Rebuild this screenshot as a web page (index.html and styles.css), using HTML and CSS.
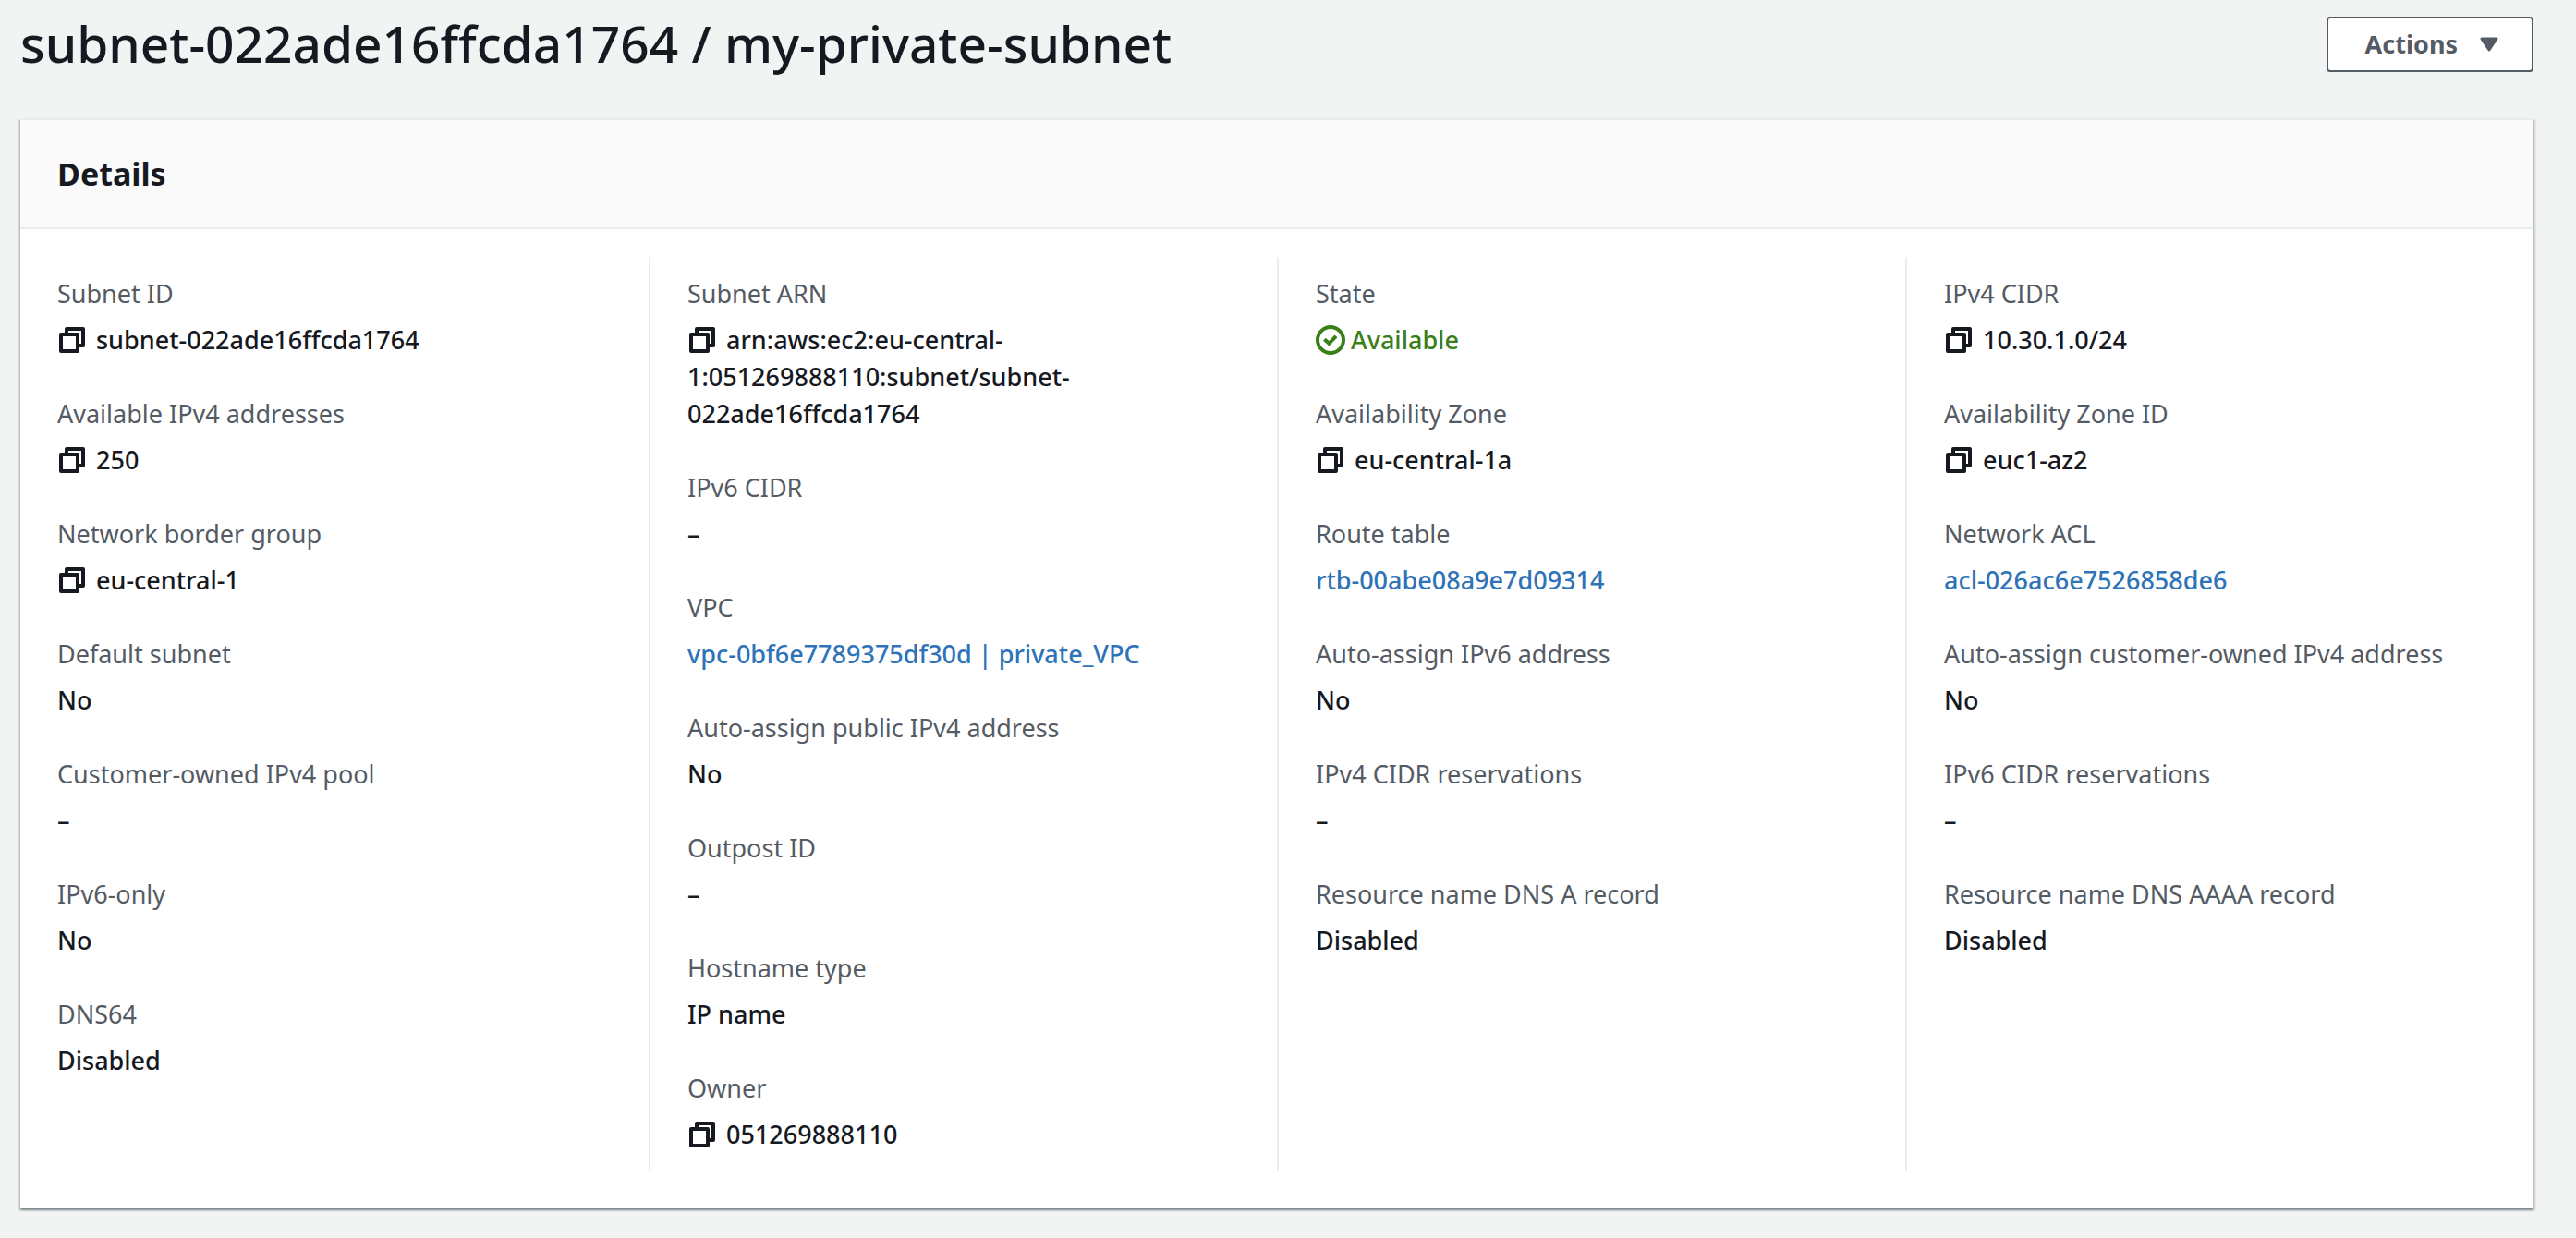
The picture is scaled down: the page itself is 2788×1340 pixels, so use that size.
FILE: index.html
```html
<!DOCTYPE html>
<html lang="en">
<head>
<meta charset="utf-8">
<meta name="viewport" content="width=device-width, initial-scale=1">
<title>subnet-022ade16ffcda1764 / my-private-subnet</title>
<link rel="stylesheet" href="styles.css">
</head>
<body>
<svg class="sprite" aria-hidden="true">
  <symbol id="copy" viewBox="0 0 16 16">
    <g fill="none" stroke="currentColor" stroke-width="2" stroke-linejoin="round">
      <path d="M2 5h9v9H2z"/>
      <path d="M5 5V2h9v9h-3"/>
    </g>
  </symbol>
  <symbol id="check" viewBox="0 0 16 16">
    <g fill="none" stroke="currentColor" stroke-width="2">
      <circle cx="8" cy="8" r="7"/>
      <path d="M4.700 7.600 7.200 9.900 11 5.900"/>
    </g>
  </symbol>
</svg>
<main class="page">
  <header class="page-header">
    <h1 class="page-title">subnet-022ade16ffcda1764 / my-private-subnet</h1>
    <button class="actions" type="button">Actions
      <svg class="caret" viewBox="0 0 20 16" aria-hidden="true"><path d="M2 2h16l-8 12z" fill="currentColor" stroke="currentColor" stroke-width="3" stroke-linejoin="round"/></svg>
    </button>
  </header>
  <section class="card">
    <h2 class="card-title">Details</h2>
    <div class="columns">
      <dl class="column">
        <div class="field"><dt>Subnet ID</dt><dd><button class="copy" type="button" aria-label="Copy subnet ID"><svg><use href="#copy"/></svg></button>subnet-022ade16ffcda1764</dd></div>
        <div class="field"><dt>Available IPv4 addresses</dt><dd><button class="copy" type="button" aria-label="Copy available IPv4 addresses"><svg><use href="#copy"/></svg></button>250</dd></div>
        <div class="field"><dt>Network border group</dt><dd><button class="copy" type="button" aria-label="Copy network border group"><svg><use href="#copy"/></svg></button>eu-central-1</dd></div>
        <div class="field"><dt>Default subnet</dt><dd>No</dd></div>
        <div class="field"><dt>Customer-owned IPv4 pool</dt><dd>–</dd></div>
        <div class="field"><dt>IPv6-only</dt><dd>No</dd></div>
        <div class="field"><dt>DNS64</dt><dd>Disabled</dd></div>
      </dl>
      <dl class="column">
        <div class="field"><dt>Subnet ARN</dt><dd><button class="copy" type="button" aria-label="Copy subnet ARN"><svg><use href="#copy"/></svg></button>arn:aws:ec2:eu-central-<wbr>1:051269888110:subnet/subnet-<wbr>022ade16ffcda1764</dd></div>
        <div class="field"><dt>IPv6 CIDR</dt><dd>–</dd></div>
        <div class="field"><dt>VPC</dt><dd><a href="#vpc">vpc-0bf6e7789375df30d | private_VPC</a></dd></div>
        <div class="field"><dt>Auto-assign public IPv4 address</dt><dd>No</dd></div>
        <div class="field"><dt>Outpost ID</dt><dd>–</dd></div>
        <div class="field"><dt>Hostname type</dt><dd>IP name</dd></div>
        <div class="field"><dt>Owner</dt><dd><button class="copy" type="button" aria-label="Copy owner"><svg><use href="#copy"/></svg></button>051269888110</dd></div>
      </dl>
      <dl class="column">
        <div class="field"><dt>State</dt><dd class="status"><svg class="status-icon" aria-hidden="true"><use href="#check"/></svg>Available</dd></div>
        <div class="field"><dt>Availability Zone</dt><dd><button class="copy" type="button" aria-label="Copy availability zone"><svg><use href="#copy"/></svg></button>eu-central-1a</dd></div>
        <div class="field"><dt>Route table</dt><dd><a href="#route-table">rtb-00abe08a9e7d09314</a></dd></div>
        <div class="field"><dt>Auto-assign IPv6 address</dt><dd>No</dd></div>
        <div class="field"><dt>IPv4 CIDR reservations</dt><dd>–</dd></div>
        <div class="field"><dt>Resource name DNS A record</dt><dd>Disabled</dd></div>
      </dl>
      <dl class="column">
        <div class="field"><dt>IPv4 CIDR</dt><dd><button class="copy" type="button" aria-label="Copy IPv4 CIDR"><svg><use href="#copy"/></svg></button>10.30.1.0/24</dd></div>
        <div class="field"><dt>Availability Zone ID</dt><dd><button class="copy" type="button" aria-label="Copy availability zone ID"><svg><use href="#copy"/></svg></button>euc1-az2</dd></div>
        <div class="field"><dt>Network ACL</dt><dd><a href="#network-acl">acl-026ac6e7526858de6</a></dd></div>
        <div class="field"><dt>Auto-assign customer-owned IPv4 address</dt><dd>No</dd></div>
        <div class="field"><dt>IPv6 CIDR reservations</dt><dd>–</dd></div>
        <div class="field"><dt>Resource name DNS AAAA record</dt><dd>Disabled</dd></div>
      </dl>
    </div>
  </section>
</main>
</body>
</html>
```
FILE: styles.css
```css
* {
  box-sizing: border-box;
}

body {
  margin: 0;
  background: #f2f3f3;
  color: #16191f;
  font-family: "Noto Sans", "Open Sans", sans-serif;
  font-size: 27px;
  line-height: 40px;
}

.sprite {
  display: none;
}

.page {
  padding: 18px 46px 32px 22px;
}

.page-header {
  display: flex;
  align-items: flex-start;
  justify-content: space-between;
  margin-bottom: 50px;
}

.page-title {
  margin: 0;
  font-size: 55px;
  font-weight: 500;
  line-height: 58px;
}

.actions {
  display: flex;
  align-items: center;
  gap: 24px;
  height: 60px;
  padding: 0 36px 0 40px;
  border: 2px solid #545b64;
  border-radius: 4px;
  background: #fff;
  color: #545b64;
  font: inherit;
  font-weight: 700;
}

.caret {
  width: 20px;
  height: 16px;
}

.card {
  border-top: 2px solid #eaeded;
  background: #fff;
  box-shadow:
    0 2px 2px rgba(0, 28, 36, 0.3),
    2px 2px 2px rgba(0, 28, 36, 0.15),
    -2px 2px 2px rgba(0, 28, 36, 0.15);
}

.card-title {
  margin: 0;
  padding: 38px 40px;
  border-bottom: 2px solid #eaeded;
  background: #fafafa;
  font-size: 34px;
  font-weight: 700;
  line-height: 40px;
}

.columns {
  display: grid;
  grid-template-columns: repeat(4, 1fr);
  padding: 30px 0 40px;
}

.column {
  display: flex;
  flex-direction: column;
  gap: 40px;
  margin: 0;
  padding: 20px 40px;
}

.column + .column {
  border-left: 2px solid #eaeded;
}

.field {
  display: flex;
  flex-direction: column;
  gap: 10px;
}

dt {
  color: #545b64;
}

dd {
  margin: 0;
  font-weight: 500;
}

a {
  color: #2e73b8;
  text-decoration: none;
}

.copy {
  width: 32px;
  height: 32px;
  margin-right: 10px;
  padding: 0;
  border: 0;
  background: none;
  color: inherit;
  vertical-align: -6px;
}

.copy svg {
  display: block;
  width: 32px;
  height: 32px;
}

.status {
  color: #3a8019;
}

.status-icon {
  width: 32px;
  height: 32px;
  margin-right: 6px;
  vertical-align: -6px;
}
```
